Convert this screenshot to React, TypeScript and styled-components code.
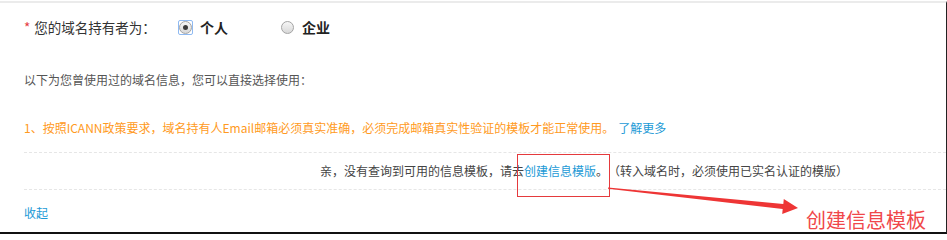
import styled, { createGlobalStyle, css } from "styled-components";

const GlobalStyle = createGlobalStyle`
  html, body {
    margin: 0;
    padding: 0;
    background: #fff;
  }
  body {
    font-family: "Noto Sans CJK SC", "Noto Sans", sans-serif;
    color: #333;
    text-spacing-trim: space-all;
  }
`;

const Frame = styled.div`
  position: relative;
  box-sizing: border-box;
  width: 947px;
  height: 233px;
  margin-top: 1px;
  border-top: 2px solid #ebebeb;
  border-right: 1px solid #222;
  border-bottom: 2px solid #111;
  padding-left: 24px;
  overflow: hidden;
`;

const OwnerRow = styled.div`
  display: flex;
  align-items: center;
  height: 48px;
`;

const Label = styled.div`
  width: 154px;
  font-size: 13.5px;
  color: #333;
  span {
    color: #e4393c;
    margin-right: 4px;
  }
`;

const Option = styled.label<{ $gap?: number }>`
  display: inline-flex;
  align-items: center;
  gap: 7px;
  margin-right: ${({ $gap }) => $gap ?? 0}px;
  font-size: 14px;
  font-weight: 700;
  color: #222;
`;

const RadioFocus = styled.span<{ $checked?: boolean }>`
  box-sizing: border-box;
  width: 15px;
  height: 15px;
  display: inline-flex;
  align-items: center;
  justify-content: center;
  border-radius: 2px;
  ${({ $checked }) =>
    $checked &&
    css`
      border: 1px solid #8fbaf2;
    `}
`;

const RadioDot = styled.span<{ $checked?: boolean }>`
  position: relative;
  box-sizing: border-box;
  width: 13px;
  height: 13px;
  border-radius: 50%;
  border: 1px solid #a4a4a4;
  background: linear-gradient(#f6f6f6, #d8d8d8);
  ${({ $checked }) =>
    $checked &&
    css`
      &::after {
        content: "";
        position: absolute;
        left: 3px;
        top: 3px;
        width: 5px;
        height: 5px;
        border-radius: 50%;
        background: #3a3a3a;
      }
    `}
`;

const Hint = styled.div`
  height: 58px;
  line-height: 58px;
  font-size: 12px;
  color: #555;
`;

const Warning = styled.div`
  height: 43px;
  line-height: 38px;
  font-size: 12px;
  color: #ff9a22;
  border-bottom: 1px dashed #e6e6e6;
`;

const TextLink = styled.a<{ $gap?: number }>`
  color: #1c9ad6;
  text-decoration: none;
  margin-left: ${({ $gap }) => $gap ?? 0}px;
  cursor: pointer;
`;

const Empty = styled.div`
  height: 36px;
  line-height: 36px;
  padding-left: 296px;
  font-size: 12px;
  color: #444;
  border-bottom: 1px dashed #e6e6e6;
`;

const Footer = styled.div`
  padding-top: 13px;
  line-height: 20px;
  font-size: 12px;
`;

/* annotation drawn over the page */
const MarkBox = styled.div`
  position: absolute;
  left: 517px;
  top: 151px;
  width: 93px;
  height: 43px;
  box-sizing: border-box;
  border: 1px solid #e53a3d;
`;

const Arrow = styled.svg`
  position: absolute;
  left: 0;
  top: -3px;
  pointer-events: none;
`;

const MarkText = styled.div`
  position: absolute;
  left: 806px;
  top: 204px;
  font-size: 20px;
  line-height: 26px;
  color: #f0474a;
`;

export default function App() {
  return (
    <>
      <GlobalStyle />
      <Frame>
        <OwnerRow>
          <Label>
            <span>*</span>您的域名持有者为：
          </Label>
          <Option $gap={52}>
            <RadioFocus $checked>
              <RadioDot $checked />
            </RadioFocus>
            个人
          </Option>
          <Option>
            <RadioFocus>
              <RadioDot />
            </RadioFocus>
            企业
          </Option>
        </OwnerRow>
        <Hint>以下为您曾使用过的域名信息，您可以直接选择使用：</Hint>
        <Warning>
          1、按照ICANN政策要求，域名持有人Email邮箱必须真实准确，必须完成邮箱真实性验证的模板才能正常使用。
          <TextLink $gap={4}>了解更多</TextLink>
        </Warning>
        <Empty>
          亲，没有查询到可用的信息模板，请去<TextLink>创建信息模版</TextLink>。（转入域名时，必须使用已实名认证的模版）
        </Empty>
        <Footer>
          <TextLink>收起</TextLink>
        </Footer>
        <MarkBox />
        <Arrow width="947" height="234" viewBox="0 0 947 234">
          <polygon
            points="608,187.4 783.3,203.9 783.8,199 798,208 782.2,213.9 782.7,208.9 608,188.8"
            fill="#ee3535"
          />
        </Arrow>
        <MarkText>创建信息模板</MarkText>
      </Frame>
    </>
  );
}
